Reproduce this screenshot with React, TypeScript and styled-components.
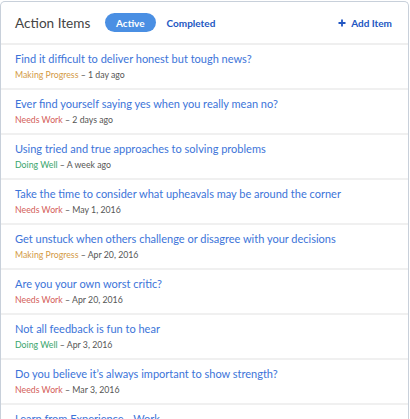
import React from 'react';
import styled, { createGlobalStyle } from 'styled-components';

const GlobalStyle = createGlobalStyle`
    body {
        margin: 0;
        background: #fff;
        font-family: Lato, "Open Sans", sans-serif;
    }
`;

const Card = styled.div`
    margin-top: 1px;
    width: 409px;
    box-sizing: border-box;
    border: 1px solid #c8d0da;
    border-bottom: none;
    border-radius: 5px 5px 0 0;
    background: #fff;
`;

const Header = styled.div`
    display: flex;
    align-items: center;
    height: 41px;
    padding: 0 16px 0 14px;
    border-bottom: 2px solid #efefef;
`;

const Title = styled.h2`
    width: 73px;
    margin: 0 17px 0 0;
    font-size: 13.6px;
    font-weight: 400;
    color: #444;
    white-space: nowrap;
`;

const Tab = styled.button<{ active?: boolean }>`
    border: none;
    height: 19px;
    padding: 0 11px;
    border-radius: 10px;
    font-family: inherit;
    font-size: 10px;
    font-weight: 700;
    cursor: pointer;
    background: ${props => (props.active ? '#4a8fe3' : 'transparent')};
    color: ${props => (props.active ? '#fff' : '#2256c2')};
`;

const AddButton = styled.button`
    margin-left: auto;
    border: none;
    background: transparent;
    padding: 0;
    display: flex;
    align-items: center;
    gap: 5px;
    font-family: inherit;
    font-size: 10px;
    font-weight: 700;
    color: #2256c2;
`;

const List = styled.ul`
    list-style: none;
    margin: 0;
    padding: 0;
`;

const Row = styled.li`
    height: 45px;
    padding: 6px 14px 0;
    box-sizing: border-box;
    border-bottom: 2px solid #f0f0f0;
`;

const ItemTitle = styled.a`
    display: block;
    font-size: 11px;
    line-height: 16px;
    color: #3c74d9;
    text-decoration: none;
    white-space: nowrap;
`;

const Meta = styled.div`
    font-size: 8.75px;
    line-height: 12px;
    margin-top: 2px;
    color: #555;
`;

const Status = styled.span<{ tone: string }>`
    color: ${props => props.tone};
`;

const tones: Record<string, string> = {
    'Making Progress': '#d39a45',
    'Needs Work': '#d4605a',
    'Doing Well': '#38a56c',
};

const items = [
    { title: 'Find it difficult to deliver honest but tough news?', status: 'Making Progress', when: '1 day ago' },
    { title: 'Ever find yourself saying yes when you really mean no?', status: 'Needs Work', when: '2 days ago' },
    { title: 'Using tried and true approaches to solving problems', status: 'Doing Well', when: 'A week ago' },
    { title: 'Take the time to consider what upheavals may be around the corner', status: 'Needs Work', when: 'May 1, 2016' },
    { title: 'Get unstuck when others challenge or disagree with your decisions', status: 'Making Progress', when: 'Apr 20, 2016' },
    { title: 'Are you your own worst critic?', status: 'Needs Work', when: 'Apr 20, 2016' },
    { title: 'Not all feedback is fun to hear', status: 'Doing Well', when: 'Apr 3, 2016' },
    { title: 'Do you believe it’s always important to show strength?', status: 'Needs Work', when: 'Mar 3, 2016' },
    { title: 'Learn from Experience - Work', status: 'Doing Well', when: 'Mar 1, 2016' },
];

const PlusIcon = () => (
    <svg width="8" height="8" viewBox="0 0 8 8">
        <path d="M4 0.5v7M0.5 4h7" stroke="currentColor" strokeWidth="1.8" />
    </svg>
);

const App = () => (
    <>
        <GlobalStyle />
        <Card>
            <Header>
                <Title>Action Items</Title>
                <Tab active>Active</Tab>
                <Tab>Completed</Tab>
                <AddButton>
                    <PlusIcon />
                    Add Item
                </AddButton>
            </Header>
            <List>
                {items.map(item => (
                    <Row key={item.title}>
                        <ItemTitle href="#">{item.title}</ItemTitle>
                        <Meta>
                            <Status tone={tones[item.status]}>{item.status}</Status> – {item.when}
                        </Meta>
                    </Row>
                ))}
            </List>
        </Card>
    </>
);

export default App;
